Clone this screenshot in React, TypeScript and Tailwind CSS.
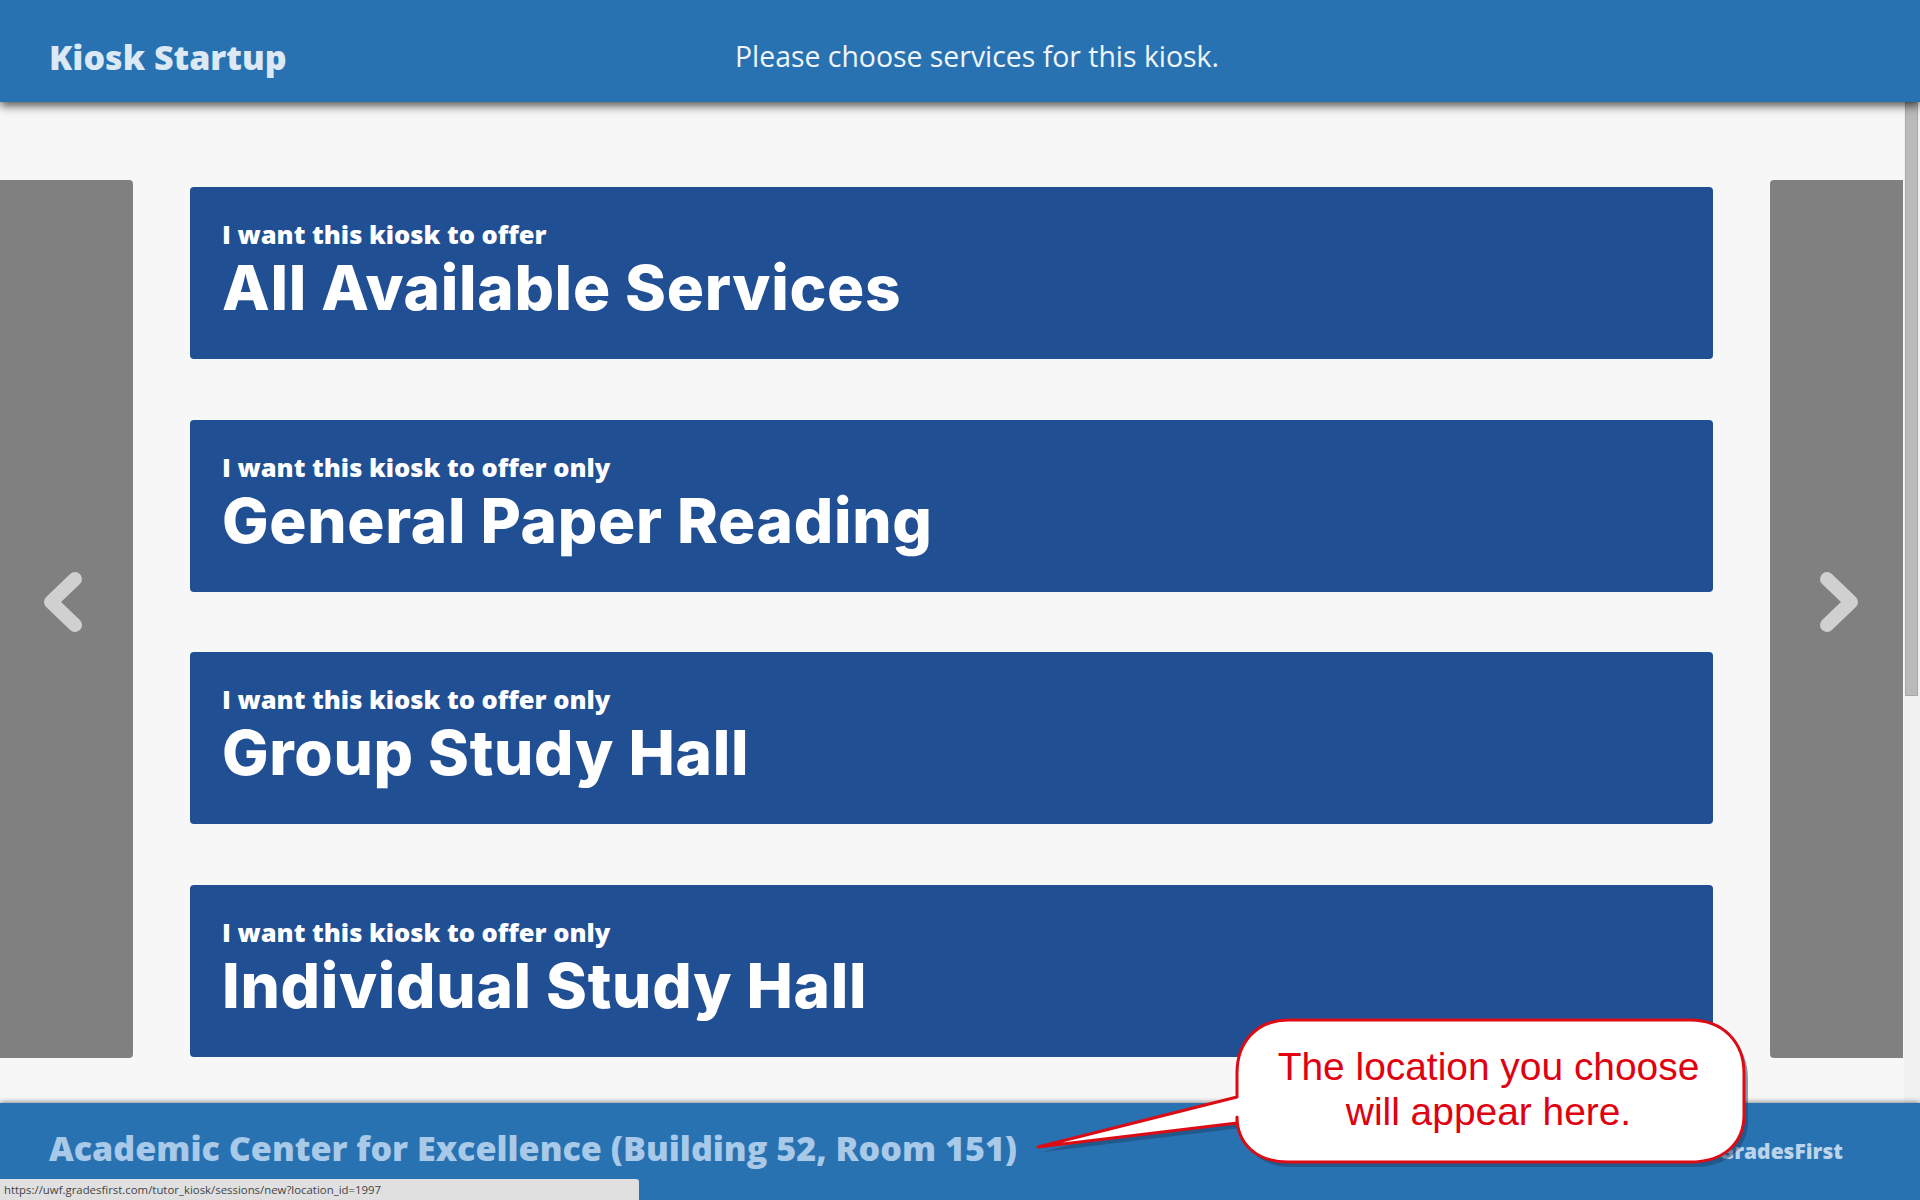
const openSans = "font-['Open_Sans','Noto_Sans',sans-serif]";

const services = [
  { lead: "I want this kiosk to offer", title: "All Available Services" },
  { lead: "I want this kiosk to offer only", title: "General Paper Reading" },
  { lead: "I want this kiosk to offer only", title: "Group Study Hall" },
  { lead: "I want this kiosk to offer only", title: "Individual Study Hall" },
];

function Chevron({ dir }: { dir: "left" | "right" }) {
  return (
    <svg width="38" height="60" viewBox="0 0 38 60" fill="none">
      <polyline
        points={dir === "left" ? "31,7 7,30 31,53" : "7,7 31,30 7,53"}
        stroke="#d0d0d0"
        strokeWidth="14"
        strokeLinecap="round"
        strokeLinejoin="round"
      />
    </svg>
  );
}

function Callout() {
  return (
    <div className="absolute left-[1030px] top-[1017px] z-30 h-[150px] w-[722px]">
      <svg width="722" height="150" viewBox="0 0 722 150" className="absolute inset-0">
        <path
          d="M258 3 H660 C694 3 714 26 714 56 V98 C714 126 694 145 660 145 H258 C226 145 207 126 207 100 V106 L8 130 L207 80 V56 C207 26 226 3 258 3 Z"
          fill="#1c3f66"
          opacity="0.5"
          transform="translate(4 5)"
        />
        <path
          d="M258 3 H660 C694 3 714 26 714 56 V98 C714 126 694 145 660 145 H258 C226 145 207 126 207 100 V106 L8 130 L207 80 V56 C207 26 226 3 258 3 Z"
          fill="#ffffff"
          stroke="#dc0b14"
          strokeWidth="3"
          strokeLinejoin="round"
        />
      </svg>
      <div className="absolute left-[205px] top-[27px] w-[507px] text-center font-['Liberation_Sans',Arial,sans-serif] text-[38.9px] leading-[45px] text-[#e0000f]">
        The location you choose
        <br />
        will appear here.
      </div>
    </div>
  );
}

export default function App() {
  return (
    <div className={`relative flex h-[1200px] w-[1920px] flex-col overflow-hidden bg-[#f7f7f7] ${openSans}`}>
      <header className="relative z-20 flex h-[102px] shrink-0 items-center bg-[#2872b2] pl-[49px] shadow-[0_4px_9px_rgba(0,0,0,0.65)]">
        <h1 className="mt-[13px] w-[686px] text-[34px] font-extrabold text-[#dce8f4]">Kiosk Startup</h1>
        <p className="mt-[10px] text-[28.4px] text-[#f0f5fa]">Please choose services for this kiosk.</p>
      </header>

      <main className="flex min-h-0 flex-1">
        <div className="mt-[78px] flex h-[878px] w-[133px] shrink-0 items-center justify-center rounded-r-[4px] bg-[#808080] pr-[7px] pb-[35px]">
          <Chevron dir="left" />
        </div>

        <div className="mx-[57px] mt-[85px] flex min-w-0 flex-1 flex-col gap-[60.5px]">
          {services.map((s) => (
            <a key={s.title} className="block h-[172px] rounded-[4px] bg-[#214f94] pl-[32px] pt-[30px] text-white">
              <div className="text-[25.5px] leading-[34px] font-extrabold">{s.lead}</div>
              <div className="mt-[2px] font-['Inter',sans-serif] text-[62px] leading-[70px] font-extrabold tracking-[0.7px]">{s.title}</div>
            </a>
          ))}
        </div>

        <div className="mt-[78px] flex h-[878px] w-[133px] shrink-0 items-center justify-center rounded-l-[4px] bg-[#808080] pl-[5px] pb-[35px]">
          <Chevron dir="right" />
        </div>

        <div className="ml-[1px] w-[16px] shrink-0 bg-[#f1f1f1]">
          <div className="ml-[1px] h-[594px] w-[13px] border border-[#a8a8a8] bg-[#bababa]" />
        </div>
      </main>

      <footer className="relative z-20 flex h-[97px] shrink-0 items-center justify-between bg-[#2872b2] pr-[77px] pl-[49px] shadow-[0_-1px_5px_rgba(0,0,0,0.45)]">
        <div className="mb-[5px] text-[34.1px] font-extrabold text-[#a9c9e8]">Academic Center for Excellence (Building 52, Room 151)</div>
        <div className="text-[21px] font-extrabold text-[#bcd4ea]">GradesFirst</div>
      </footer>

      <Callout />

      <div className="absolute bottom-0 left-0 z-30 flex h-[21px] w-[639px] items-center rounded-tr-[3px] bg-[#e0e0e0] pl-[4px] text-[11.4px] text-[#444]">
        https://uwf.gradesfirst.com/tutor_kiosk/sessions/new?location_id=1997
      </div>
    </div>
  );
}
